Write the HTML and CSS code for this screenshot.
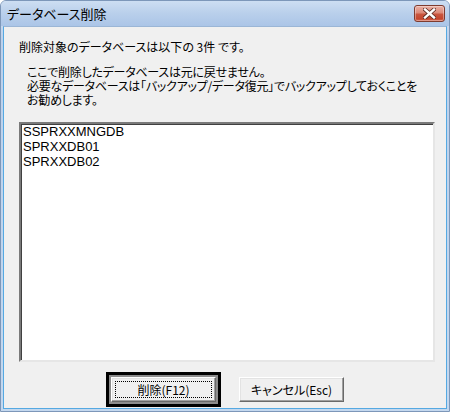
FILE: index.html
```html
<!DOCTYPE html>
<html lang="ja">
<head>
<meta charset="utf-8">
<title>データベース削除</title>
<link rel="stylesheet" href="styles.css">
</head>
<body>
<div class="window">
  <div class="titlebar">
    <span class="title">データベース削除</span>
    <div class="close">
      <svg width="13" height="11" viewBox="0 0 13 11">
        <path d="M2 1.5 L11 9.5 M11 1.5 L2 9.5" stroke="#5a2a22" stroke-width="4" stroke-linecap="square"/>
        <path d="M2 1.5 L11 9.5 M11 1.5 L2 9.5" stroke="#ffffff" stroke-width="2.4" stroke-linecap="square"/>
      </svg>
    </div>
  </div>
  <div class="client">
    <p class="lead">削除対象のデータベースは以下の 3件 です。</p>
    <div class="note">
      <div class="line">ここで削除したデータベースは元に戻せません。</div>
      <div class="line">必要なデータベースは「バックアップ/データ復元」でバックアップしておくことを</div>
      <div class="line">お勧めします。</div>
    </div>
    <div class="listbox">
      <div class="item">SSPRXXMNGDB</div>
      <div class="item">SPRXXDB01</div>
      <div class="item">SPRXXDB02</div>
    </div>
    <div class="buttons">
      <div class="default-ring">
        <button class="btn"><span class="focus">削除(F12)</span></button>
      </div>
      <button class="btn">キャンセル(Esc)</button>
    </div>
  </div>
</div>
</body>
</html>
```

FILE: styles.css
```css
* { box-sizing: border-box; }
html, body { margin: 0; padding: 0; background: #ffffff; }
body {
  font-family: "Noto Sans CJK JP", "Liberation Sans", sans-serif;
  font-size: 12px;
  color: #000;
}
.window {
  width: 450px;
  height: 412px;
  display: flex;
  flex-direction: column;
  background: linear-gradient(#d3e2f4, #bcd1ec 40px, #c4d8ef);
  border: 1px solid #7d97b9;
  border-radius: 6px 6px 0 0;
  padding: 0 2px 2px 2px;
}
.titlebar {
  height: 25px;
  flex: none;
  display: flex;
  justify-content: space-between;
  align-items: flex-start;
  background: linear-gradient(#cddef2, #b9cfeb 50%, #abc5e7);
  margin: 0 -2px;
  padding: 0 2px 0 6px;
  border-radius: 5px 5px 0 0;
}
.title {
  font-size: 13px;
  line-height: 14px;
  margin-top: 6px;
  font-feature-settings: "palt";
  color: #000;
}
.close {
  width: 31px;
  height: 17px;
  margin-top: 4px;
  margin-right: 2px;
  border: 1px solid #7e3b2f;
  border-radius: 3px;
  background: linear-gradient(#eab0a4, #dc8a79 45%, #c9553e 55%, #c4472f 85%, #d46a55);
  box-shadow: inset 0 0 0 1px rgba(255,255,255,0.35);
  display: flex;
  align-items: center;
  justify-content: center;
}
.close svg { display: block; }
.client {
  flex: 1;
  background: #f0f0f0;
  border: 1px solid #55a9e2;
  border-top: 1px solid #9bb6d6;
  display: flex;
  flex-direction: column;
}
.lead {
  margin: 13px 0 0 15px;
  line-height: 14px;
  font-feature-settings: "palt";
}
.note {
  margin: 11px 0 0 23px;
  line-height: 14px;
  font-feature-settings: "palt";
  letter-spacing: -0.25px;
}
.line { height: 14px; white-space: nowrap; }
.listbox {
  margin: 15px 0 0 15px;
  width: 416px;
  height: 240px;
  flex: none;
  background: #fff;
  border-style: solid;
  border-width: 2px;
  border-color: #7a7a7a #e6e6e6 #e6e6e6 #7a7a7a;
  box-shadow: inset 1px 1px 0 #404040;
  padding: 0 0 0 2px;
  font-family: "Liberation Sans", "Noto Sans CJK JP", sans-serif;
  font-size: 13px;
  line-height: 15px;
}
.item { white-space: nowrap; }
.buttons {
  margin-top: 10px;
  height: 35px;
  display: flex;
  align-items: center;
  justify-content: center;
  gap: 18px;
}
.default-ring {
  border: 3px solid #000;
  box-shadow: inset 0 0 0 2px #8c8c8c;
  padding: 2px;
}
.btn {
  width: 105px;
  height: 25px;
  margin: 0;
  padding: 0;
  font-family: "Noto Sans CJK JP", "Liberation Sans", sans-serif;
  font-size: 12px;
  color: #000;
  background: #f0f0f0;
  border: 1px solid;
  border-color: #ffffff #696969 #696969 #ffffff;
  box-shadow: inset -1px -1px 0 #a0a0a0, inset 1px 1px 0 #e3e3e3;
  display: flex;
  align-items: center;
  justify-content: center;
  font-feature-settings: "palt";
}
.focus {
  width: 97px;
  height: 17px;
  border: 1px dotted #000;
  display: flex;
  align-items: center;
  justify-content: center;
}
```
